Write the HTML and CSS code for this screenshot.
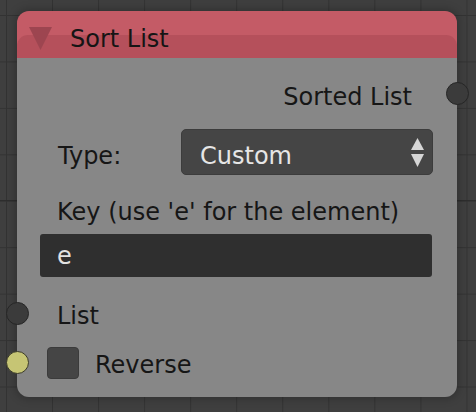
FILE: index.html
```html
<!DOCTYPE html>
<html>
<head>
<meta charset="utf-8">
<title>Sort List</title>
<link rel="stylesheet" href="styles.css">
</head>
<body>
<div class="node">
  <div class="header">
    <svg class="collapse" width="23" height="23" viewBox="0 0 23 23"><polygon points="0,0 23,0 11.5,23" fill="#9d4550"/></svg>
    <span class="title">Sort List</span>
  </div>
  <div class="body">
    <div class="row out">
      <span class="text">Sorted List</span>
      <span class="socket socket-out"></span>
    </div>
    <div class="row type">
      <span class="text label">Type:</span>
      <div class="dropdown">
        <span class="dd-text">Custom</span>
        <svg class="dd-arrows" width="13" height="30" viewBox="0 0 13 30"><polygon points="6.5,0 13,12 0,12" fill="#d6d6d6"/><polygon points="0,16 13,16 6.5,29" fill="#d6d6d6"/></svg>
      </div>
    </div>
    <div class="text key-label">Key (use 'e' for the element)</div>
    <div class="field"><span class="field-text">e</span></div>
    <div class="row list">
      <span class="socket socket-in"></span>
      <span class="text">List</span>
    </div>
    <div class="row reverse">
      <span class="socket socket-bool"></span>
      <span class="checkbox"></span>
      <span class="text rev-text">Reverse</span>
    </div>
  </div>
</div>
</body>
</html>
```
FILE: styles.css
```css
html, body {
  margin: 0;
  padding: 0;
}
body {
  width: 476px;
  height: 412px;
  overflow: hidden;
  font-family: "DejaVu Sans", "Liberation Sans", sans-serif;
  font-size: 24px;
  background-color: #3f3f3f;
  background-image:
    linear-gradient(to bottom, transparent 200px, #2d2d2d 200px, #2d2d2d 201px, transparent 201px),
    linear-gradient(to right, #333333 1px, transparent 1px),
    linear-gradient(to bottom, #333333 1px, transparent 1px);
  background-size: 100% 100%, 46.05px 100%, 100% 46.45px;
  background-position: 0 0, 6px 0, 0 15px;
  display: flex;
  align-items: flex-start;
}
.node {
  margin: 11px 0 0 17px;
  width: 440px;
  border-radius: 12px;
  box-shadow: 0 0 9px 2px rgba(0, 0, 0, 0.22);
  display: flex;
  flex-direction: column;
}
.header {
  position: relative;
  height: 47px;
  box-sizing: border-box;
  padding-top: 8px;
  background: #c45b66;
  border-radius: 12px 12px 0 0;
  display: flex;
  align-items: center;
}
.header::before {
  content: "";
  position: absolute;
  left: 0;
  right: 0;
  top: 24px;
  bottom: 0;
  background: #b5505b;
  border-radius: 11px 11px 0 0;
}
.collapse {
  position: relative;
  margin-left: 12px;
  flex: none;
}
.title {
  position: relative;
  margin-left: 18px;
  line-height: 28px;
  color: #151515;
}
.body {
  background: #878787;
  border-radius: 0 0 12px 12px;
  padding-bottom: 18px;
  display: flex;
  flex-direction: column;
}
.text {
  line-height: 28px;
  color: #161616;
  white-space: nowrap;
}
.row {
  position: relative;
  display: flex;
}
.out {
  margin-top: 25px;
  height: 28px;
  justify-content: flex-end;
  padding-right: 45px;
}
.socket {
  position: absolute;
  width: 23px;
  height: 23px;
  box-sizing: border-box;
  border-radius: 50%;
}
.socket-out {
  right: -11.5px;
  top: -1.5px;
  background: #3b3b3b;
  border: 1px solid #262626;
}
.socket-in {
  left: -11.5px;
  top: 0;
  background: #3b3b3b;
  border: 1px solid #262626;
}
.socket-bool {
  left: -11.5px;
  top: 4px;
  background: #c6c574;
  border: 1px solid #3a3a2a;
}
.type {
  margin-top: 18px;
  height: 46px;
  align-items: flex-start;
}
.label {
  padding-left: 41px;
  padding-top: 13px;
}
.dropdown {
  margin-left: auto;
  margin-right: 24px;
  width: 252px;
  height: 46px;
  box-sizing: border-box;
  background: #454545;
  border: 1px solid #3c3c3c;
  border-radius: 5px;
  display: flex;
  align-items: flex-start;
  padding: 12px 8px 0 18px;
}
.dd-text {
  line-height: 28px;
  color: #e6e6e6;
}
.dd-arrows {
  margin-left: auto;
  margin-top: -4px;
  flex: none;
}
.key-label {
  margin-top: 23px;
  padding-left: 40px;
}
.field {
  margin: 8px 25px 0 23px;
  height: 43px;
  background: #2f2f2f;
  border-radius: 3px;
  display: flex;
  align-items: center;
  padding-left: 17px;
}
.field-text {
  line-height: 28px;
  color: #e2e2e2;
}
.list {
  margin-top: 25px;
  height: 28px;
  padding-left: 40px;
}
.reverse {
  margin-top: 17px;
  height: 32px;
  align-items: flex-start;
}
.checkbox {
  margin-left: 30px;
  width: 32px;
  height: 32px;
  box-sizing: border-box;
  background: #454545;
  border: 1px solid #3b3b3b;
  border-radius: 4px;
  flex: none;
}
.rev-text {
  margin-left: 16px;
  margin-top: 4px;
}
```
